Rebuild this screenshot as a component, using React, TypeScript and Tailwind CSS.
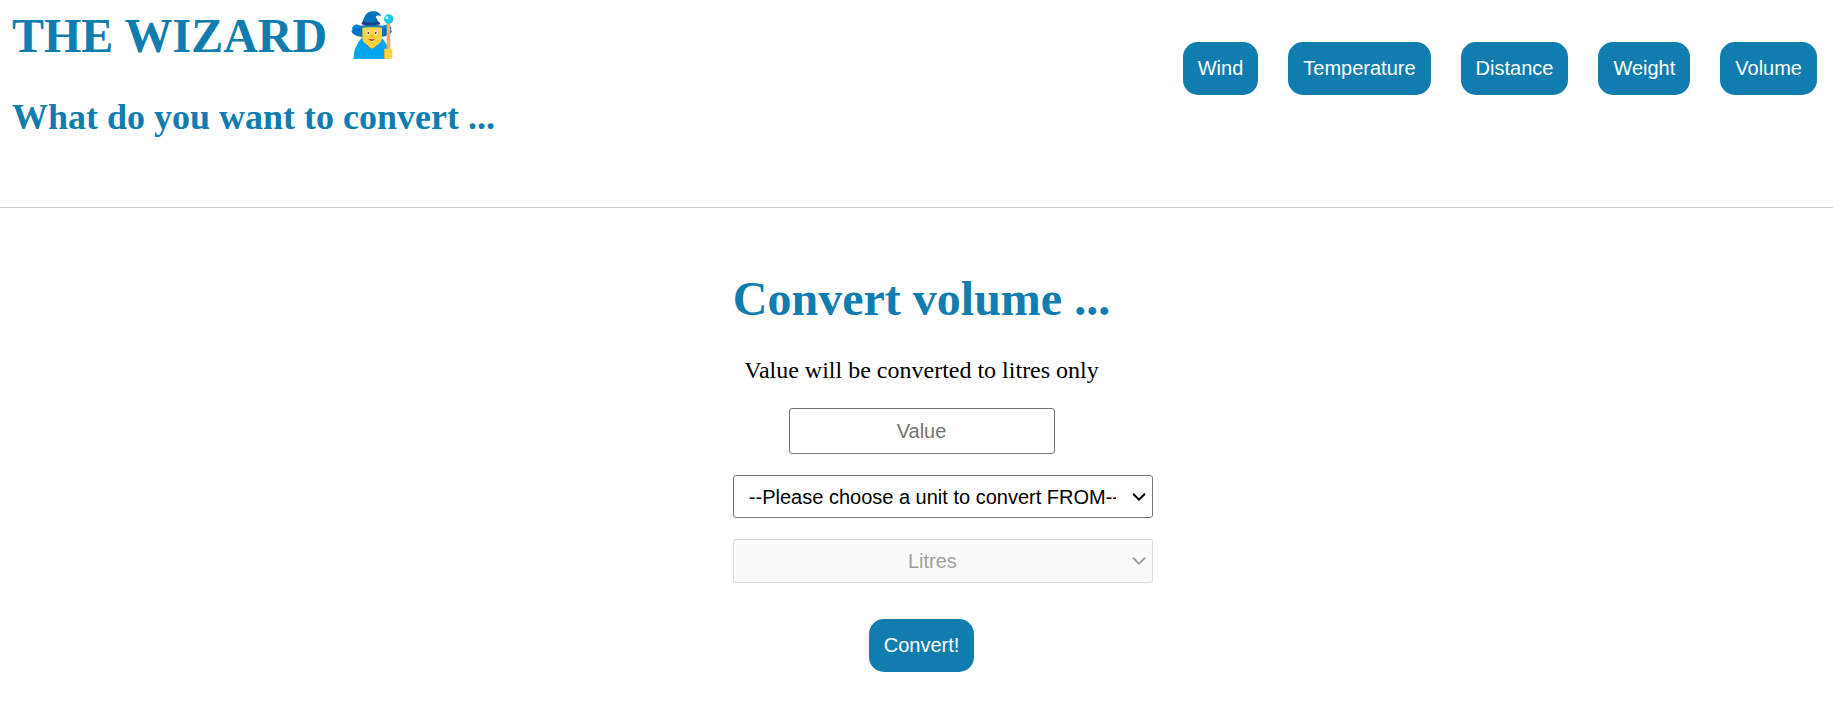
import { useState } from "react";

const categories = ["Wind", "Temperature", "Distance", "Weight", "Volume"];

const litresPerUnit: Record<string, number> = {
  Pints: 0.568261,
  Gallons: 4.54609,
  "Fluid ounces": 0.0284131,
};

const buttonClass =
  "block cursor-pointer rounded-[15px] bg-[#117dae] p-[15px] text-center font-['Liberation_Sans',Arial,sans-serif] text-[20px] leading-[23px] text-white";

const fieldClass =
  "appearance-none rounded-[3px] border text-center font-['Liberation_Sans',Arial,sans-serif] text-[20px] leading-[24px]";

function WizardIcon() {
  return (
    <svg viewBox="35 33 124 144" className="-mt-[2px] h-12 w-[42px]" role="img" aria-label="Wizard">
      <path d="M42 177c0-12 1-22 5-32 6-14 14-28 26-38h44c14 8 24 22 30 40v30z" fill="#00a6ed" />
      <ellipse cx="96" cy="94" rx="60" ry="20" fill="#0074ba" />
      <path d="M66 100c2 22 14 38 30 48 16-10 29-26 32-48z" fill="#0067a8" />
      <path
        d="M68 80h59v34c0 9-5 15-12 19l-14 12c-3 2-5 2-8 0l-13-12c-7-4-12-10-12-19z"
        fill="#ffd23f"
      />
      <path d="M77 95c1-6 8-8 13-5M105 90c5-3 11-1 13 5" stroke="#d8d2c4" strokeWidth="3" strokeLinecap="round" fill="none" />
      <circle cx="85" cy="99" r="5" fill="#fff" />
      <circle cx="109" cy="99" r="5" fill="#fff" />
      <circle cx="86" cy="99" r="3" fill="#54352d" />
      <circle cx="108" cy="99" r="3" fill="#54352d" />
      <path d="M94 106h6l2 5H92z" fill="#f59b23" />
      <path d="M87 117c6 2 12 2 18 0-2 7-16 7-18 0z" fill="#bb1d40" />
      <path d="M50 73c22 10 70 10 95 0 6 3 10 8 11 15-28-8-92-8-120 0 1-7 6-12 14-15z" fill="#0084ce" />
      <path d="M66 72l8-20c5-13 17-20 30-18 12 1 19 8 21 14-8-3-15-2-17 2l12 22c-14 3-40 3-54 0z" fill="#0074ba" />
      <path d="M69 65c16 4 34 4 49 0l4 8c-17 4-40 4-57 0z" fill="#233a86" />
      <path d="M141 66h11v86h-11z" fill="#f3ad61" />
      <circle cx="147" cy="57" r="14" fill="#00c9ec" />
      <circle cx="142" cy="53" r="5" fill="#b5f3ff" />
      <path d="M133 150c0-3 2-4 5-4h16c3 0 4 2 4 5v20c0 4-3 6-7 6h-18z" fill="#ffd23f" />
      <path d="M133 150v27h2v-25z" fill="#d99d26" />
    </svg>
  );
}

function Chevron({ className }: { className: string }) {
  return (
    <svg
      viewBox="0 0 14 9"
      aria-hidden="true"
      className={`pointer-events-none absolute right-[7px] top-1/2 h-[9px] w-[14px] -translate-y-1/2 ${className}`}
    >
      <path d="M1 1.200l6 6 6-6" fill="none" stroke="currentColor" strokeWidth="2" />
    </svg>
  );
}

export default function App() {
  const [value, setValue] = useState("");
  const [unit, setUnit] = useState("");
  const [result, setResult] = useState("");

  const convert = () => {
    const factor = litresPerUnit[unit];
    if (factor && value) setResult(`${(Number(value) * factor).toFixed(2)} litres`);
  };

  return (
    <div className="min-h-screen bg-white font-['Liberation_Serif','Times_New_Roman',serif] text-black">
      <header className="flex flex-wrap items-start justify-between border-b border-[#cccccc] pb-[69px] pl-3 pr-4 pt-2 text-[#117dae]">
        <div>
          <h1 className="flex items-center gap-6 text-[48px] font-bold leading-[56px]">
            THE WIZARD
            <WizardIcon />
          </h1>
          <h2 className="mt-8 text-[36px] font-bold leading-[42px]">What do you want to convert ...</h2>
        </div>
        <nav className="flex flex-wrap gap-[30px] pt-[34px]">
          {categories.map((name) => (
            <button key={name} type="button" className={buttonClass}>
              {name}
            </button>
          ))}
        </nav>
      </header>

      <main className="flex justify-center pl-[10px] pt-16">
        <form
          className="flex flex-col items-center"
          onSubmit={(event) => {
            event.preventDefault();
            convert();
          }}
        >
          <h1 className="text-[48px] font-bold leading-[54px] text-[#117dae]">Convert volume ...</h1>
          <p className="mt-[30px] text-[24px] leading-[28px]">Value will be converted to litres only</p>
          <input
            type="text"
            inputMode="decimal"
            aria-label="Value"
            placeholder="Value"
            value={value}
            onChange={(event) => setValue(event.target.value)}
            className={`${fieldClass} mt-6 h-[46px] w-[266px] border-[#767676] px-[15px] placeholder:text-[#757575]`}
          />
          <div className="relative mt-[21px] w-[420px] self-start -mr-[43px]">
            <select
              aria-label="Unit to convert from"
              value={unit}
              onChange={(event) => setUnit(event.target.value)}
              className={`${fieldClass} h-[43px] w-full border-[#767676] bg-white pl-[15px] pr-[36px] text-black`}
            >
              <option value="">--Please choose a unit to convert FROM--</option>
              {Object.keys(litresPerUnit).map((name) => (
                <option key={name}>{name}</option>
              ))}
            </select>
            <Chevron className="text-black" />
          </div>
          <div className="relative mt-[21px] w-[420px] self-start -mr-[43px]">
            <select
              aria-label="Unit to convert to"
              disabled
              className={`${fieldClass} h-[44px] w-full border-[#dadada] bg-[#fafafa] pl-[15px] pr-[36px] text-[#9f9f9f] opacity-100`}
            >
              <option>Litres</option>
            </select>
            <Chevron className="text-[#9f9f9f]" />
          </div>
          <button type="submit" className={`${buttonClass} mt-9`}>
            Convert!
          </button>
          <output className="mt-4 text-[24px] leading-[28px]">{result}</output>
        </form>
      </main>
    </div>
  );
}
